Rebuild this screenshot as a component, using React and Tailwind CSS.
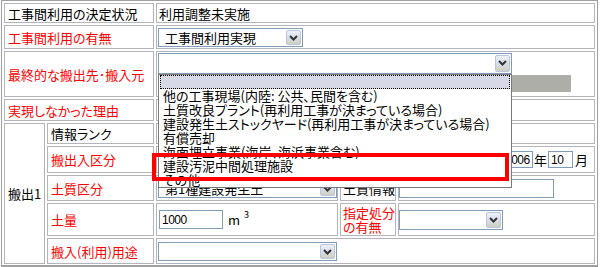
const ITEMS = [
  '',
  '他の工事現場(内陸: 公共、民間を含む)',
  '土質改良プラント(再利用工事が決まっている場合)',
  '建設発生土ストックヤード(再利用工事が決まっている場合)',
  '有償売却',
  '海面埋立事業(海岸、海浜事業含む)',
  '建設汚泥中間処理施設',
  'その他',
]

const cell = 'border border-[#b4b4bc]'
const label = `${cell} flex items-center pl-[3px]`
const red = 'text-[#ff0000]'

function Arrow() {
  return (
    <span className="m-[1px] flex w-[15px] shrink-0 self-stretch items-start justify-center rounded-[2px] border border-[#b9c6e2] bg-gradient-to-b from-[#eef1f8] via-[#d8ddea] to-[#cfd0bc] pt-[4px]">
      <svg width="9" height="6" viewBox="0 0 9 6">
        <path d="M1 1l3.5 3.5L8 1" fill="none" stroke="#333" strokeWidth="2" />
      </svg>
    </span>
  )
}

function Select({ className, text }) {
  return (
    <div className={`flex items-center border border-[#7f9db9] bg-white ${className}`}>
      <span className="min-w-0 flex-1 whitespace-nowrap pl-[6px] leading-[15px]">{text}</span>
      <Arrow />
    </div>
  )
}

function Input({ className, text }) {
  return (
    <div className={`flex items-center border border-[#7f9db9] bg-white pl-[2px] font-['Liberation_Sans',sans-serif] text-[12px] leading-none tracking-[-0.5px] ${className}`}>
      {text}
    </div>
  )
}

export default function App() {
  return (
    <div className="relative h-[267px] w-[601px] overflow-hidden bg-white font-['Noto_Sans_CJK_JP',sans-serif] text-[13px] leading-none text-black [font-feature-settings:'palt']">
      <div className="ml-[1px] grid w-[597px] grid-cols-[41px_107px_182px_56px_197px] grid-rows-[20px_24px_46px_22px_21px_27px_26px_33px_26px] gap-[2px] border border-b-[2px] border-[#a0a0a0] p-[2px] pb-[1px]">
        <div className={`${label} col-span-2`}>工事間利用の決定状況</div>
        <div className={`${cell} col-span-3 flex items-center pl-[2px]`}>利用調整未実施</div>

        <div className={`${label} col-span-2 ${red}`}>工事間利用の有無</div>
        <div className={`${cell} col-span-3 flex items-center pl-[1px]`}>
          <Select className="h-[19px] w-[145px]" text="工事間利用実現" />
        </div>

        <div className={`${label} col-span-2 ${red}`}>最終的な搬出先･搬入元</div>
        <div className={`${cell} col-span-3 flex flex-col pl-[1px] pt-[1px]`}>
          <Select className="h-[21px] w-[354px]" text="" />
          <div className="mt-[1px] h-[17px] w-[413px] bg-[#aeaea8]" />
        </div>

        <div className={`${label} col-span-2 ${red}`}>実現しなかった理由</div>
        <div className={`${cell} col-span-3`} />

        <div className={`${label} row-span-5`}>搬出1</div>
        <div className={label}>情報ランク</div>
        <div className={`${cell} col-span-3 flex items-center pl-[1px]`}>
          <Select className="h-[18px] w-[100px]" text="" />
        </div>

        <div className={`${label} ${red}`}>搬出入区分</div>
        <div className={`${cell} col-span-3 flex items-center pl-[1px] pr-[6px]`}>
          <Select className="h-[19px] w-[120px]" text="" />
          <div className="ml-auto flex items-center">
            <Input className="h-[17px] w-[31px]" text="2006" />
            <span className="mx-[1px]">年</span>
            <Input className="h-[17px] w-[25px]" text="10" />
            <span className="ml-[2px]">月</span>
          </div>
        </div>

        <div className={`${label} ${red}`}>土質区分</div>
        <div className={`${cell} flex items-center pl-[1px]`}>
          <Select className="h-[19px] w-[179px]" text="第1種建設発生土" />
        </div>
        <div className={`${cell} flex items-center pl-[2px]`}>土質情報</div>
        <div className={`${cell} flex items-center`}>
          <Input className="h-[19px] w-[155px]" text="" />
        </div>

        <div className={`${label} ${red}`}>土量</div>
        <div className={`${cell} flex items-center pl-[2px]`}>
          <Input className="h-[19px] w-[64px]" text="1000" />
          <span className="ml-[5px]">m</span>
          <sup className="ml-[4px] text-[9px]">3</sup>
        </div>
        <div className={`${cell} flex items-center pl-[2px] leading-[14px] ${red}`}>指定処分の有無</div>
        <div className={`${cell} flex items-center`}>
          <Select className="h-[20px] w-[104px]" text="" />
        </div>

        <div className={`${label} ${red}`}>搬入(利用)用途</div>
        <div className={`${cell} col-span-3 flex items-center pl-[1px]`}>
          <Select className="h-[19px] w-[179px]" text="" />
        </div>
      </div>

      <div className="absolute left-[158px] top-[74px] w-[354px] border border-[#7a7a7a] bg-white">
        {ITEMS.map((t, i) => (
          <div
            key={i}
            className={`h-[14px] whitespace-nowrap pl-[4px] leading-[14px] ${i === 0 ? 'mx-[1px] border border-dotted border-black bg-[#d7d9e6]' : ''}`}
          >
            {t}
          </div>
        ))}
      </div>

      <div className="absolute left-[152px] top-[153px] h-[28px] w-[357px] border-[4px] border-[#ff0000]" />
    </div>
  )
}
